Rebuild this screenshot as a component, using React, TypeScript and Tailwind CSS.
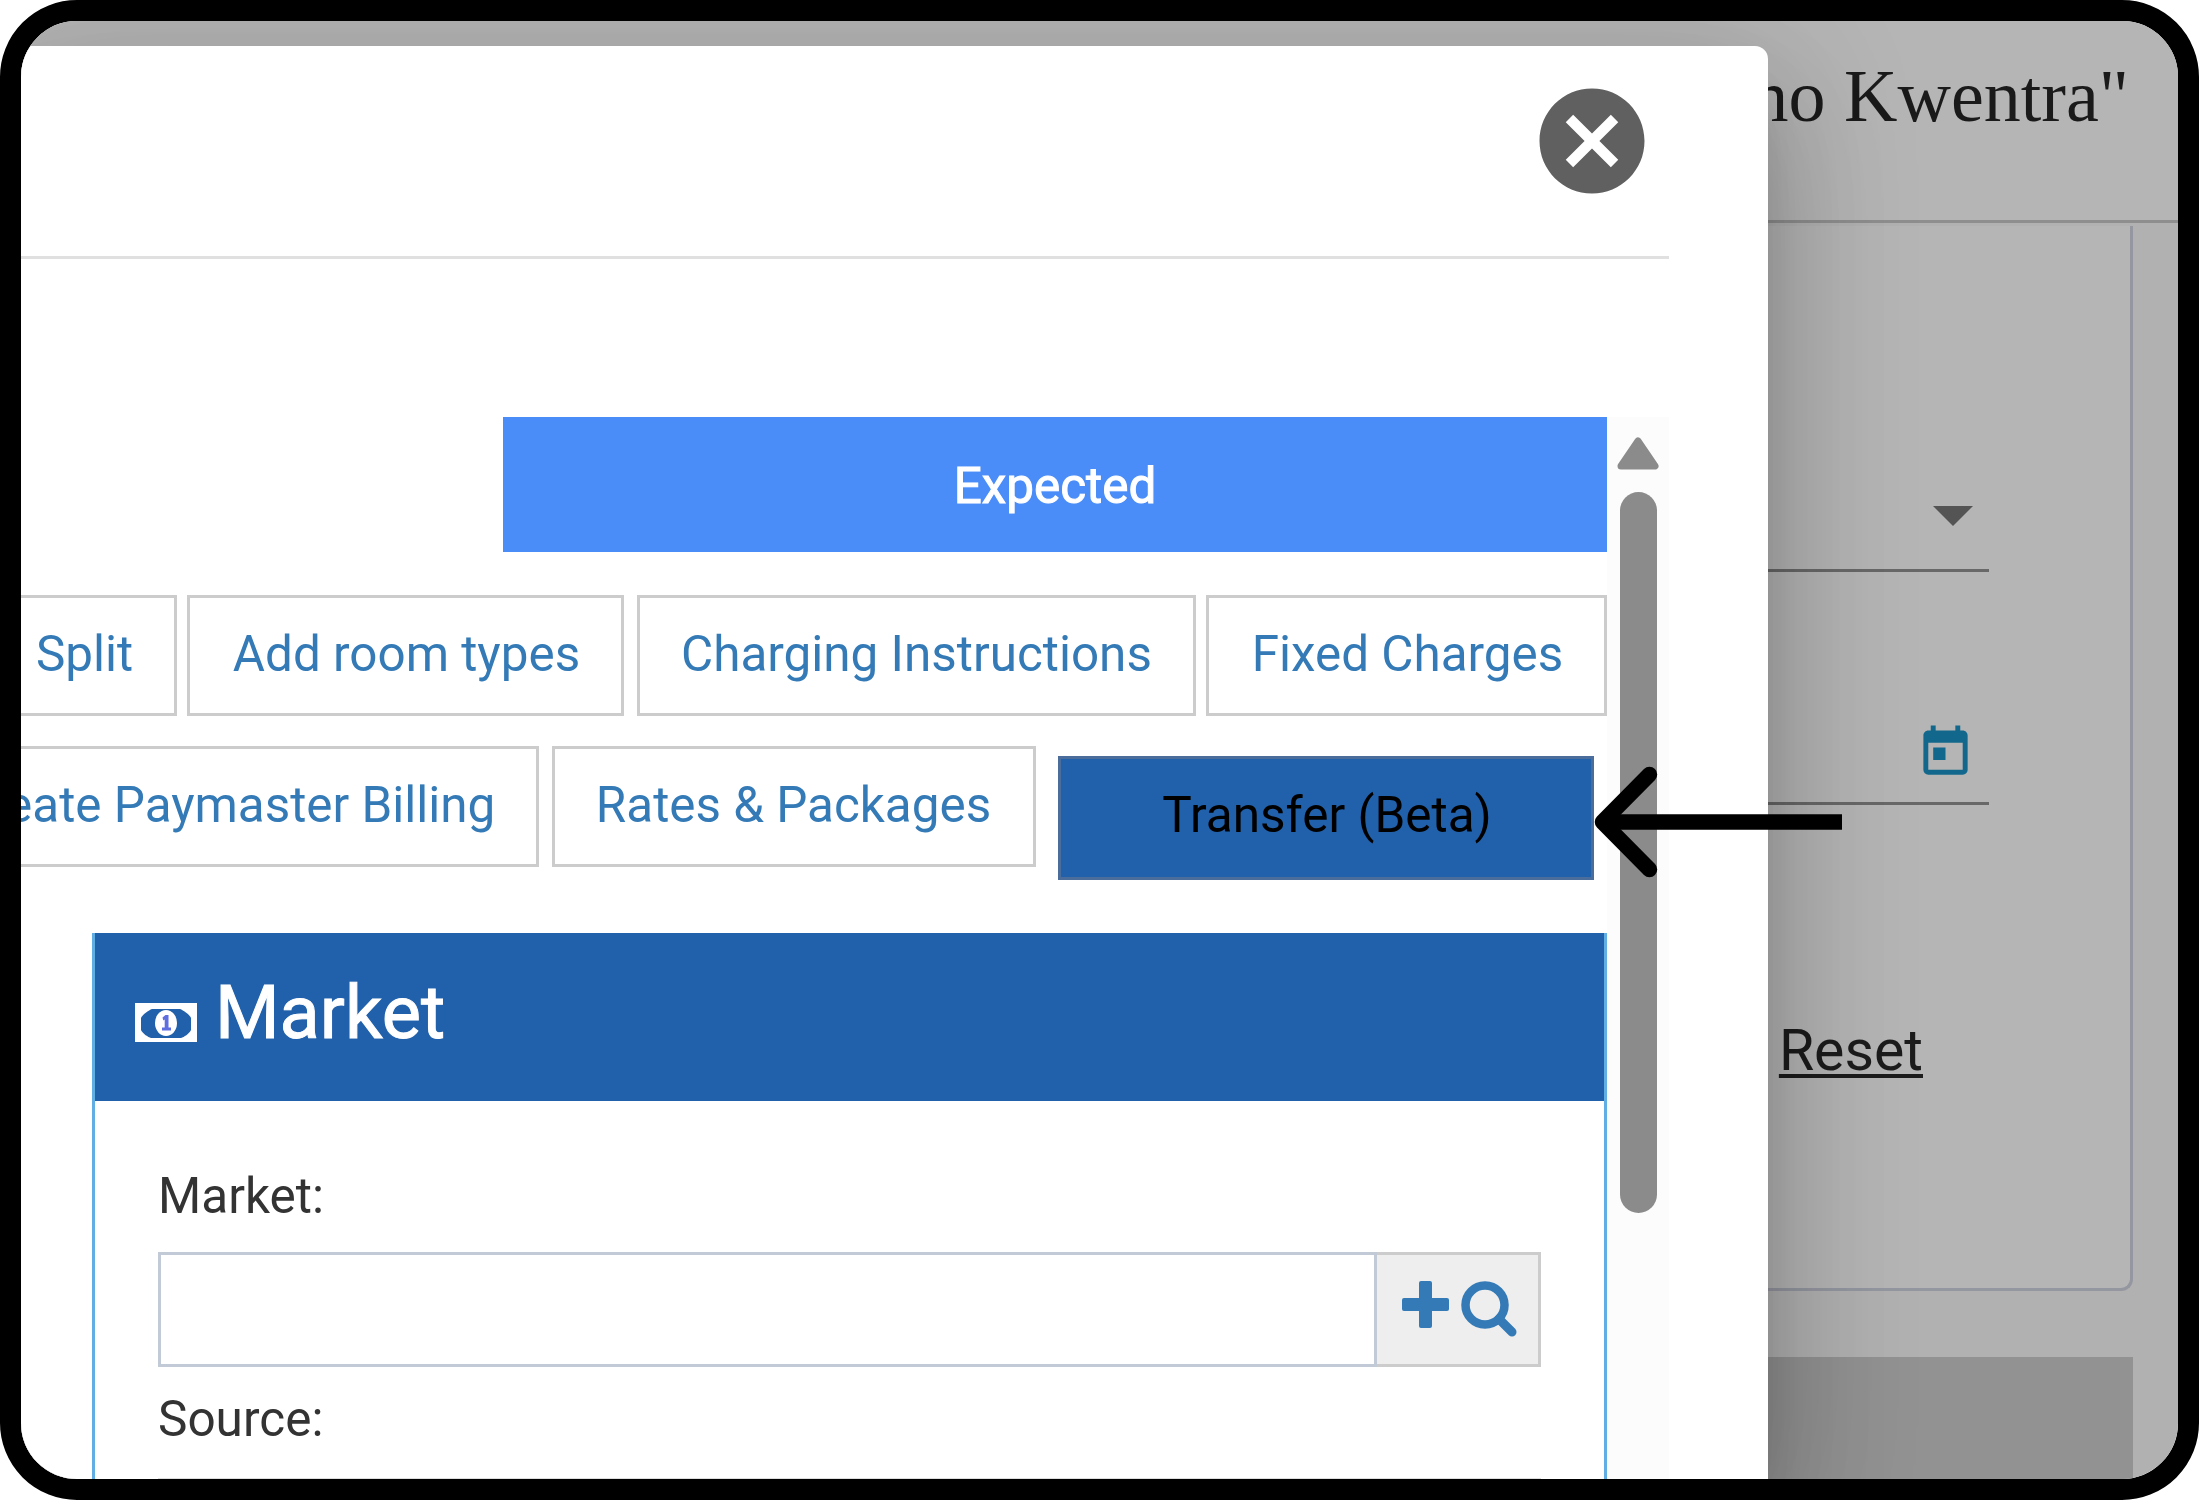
import { MdCancel, MdToday } from "react-icons/md";

type ActionButtonProps = {
  label: string;
  className: string;
};

const ActionButton = ({ label, className }: ActionButtonProps) => (
  <button
    className={`${className} h-[121px] shrink-0 border-[3px] border-[#cccccc] bg-white pb-[2px] flex items-center justify-center text-[49.4px] leading-none text-[#337ab7] whitespace-nowrap`}
  >
    {label}
  </button>
);

const MoneyIcon = () => (
  <svg width="62" height="39" viewBox="0 0 62 39" className="shrink-0">
    <rect width="62" height="39" fill="#fff" />
    <path d="M17 6h28c3 1 10 6 11 9v12c-2 4-7 7-10 8H16c-3-1-8-4-10-8V15c1-3 8-8 11-9z" fill="#2160aa" />
    <ellipse cx="31" cy="20" rx="11" ry="13" fill="#fff" />
    <path d="M27.5 14.5l3-2.5h3v12.5h2.5v3h-9v-3h2.7v-8l-1.4 1z" fill="#5f6fe0" />
  </svg>
);

const PlusIcon = () => (
  <svg width="49" height="49" viewBox="0 0 49 49">
    <path d="M20 1h9q2 0 2 2v15h15q2 0 2 2v9q0 2-2 2H31v15q0 2-2 2h-9q-2 0-2-2V31H3q-2 0-2-2v-9q0-2 2-2h15V3q0-2 2-2z" fill="#337ab7" />
  </svg>
);

const SearchIcon = () => (
  <svg width="58" height="58" viewBox="0 0 58 58">
    <circle cx="25" cy="25" r="19.5" fill="none" stroke="#337ab7" strokeWidth="8.5" />
    <path d="M39 39l13 13" stroke="#337ab7" strokeWidth="9" strokeLinecap="round" />
  </svg>
);

const BackgroundPage = () => (
  <div className="flex h-full flex-col bg-[#b1b1b1]">
    <header className="flex h-[202px] shrink-0 justify-end border-b-[3px] border-[#8e8e8e] bg-[#b5b5b5] pr-[49px] pt-[33px] font-['Liberation_Serif',serif] text-[74px] leading-[84px] text-[#1a1a1a]">
      "Demo Kwentra"
    </header>
    <section className="mr-[45px] mt-[3px] flex h-[1065px] shrink-0 flex-col rounded-br-[12px] border-b-[3px] border-r-[3px] border-[#9496a0] bg-[#b5b5b5] pr-[141px]">
      <div className="flex h-[346px] shrink-0 items-end justify-end border-b-[3px] border-[#686868] pb-[43px] pr-4">
        <svg width="40" height="20" viewBox="0 0 40 20">
          <path d="M0 0h40L20 20z" fill="#545454" />
        </svg>
      </div>
      <div className="flex h-[233px] shrink-0 items-end justify-end border-b-[3px] border-[#686868] pb-5 pr-[14px]">
        <MdToday size={59} color="#12688c" />
      </div>
      <a className="mr-[66px] mt-[213px] self-end text-[57.2px] leading-[66px] text-[#1c1c1c] underline decoration-4 underline-offset-[4px]">
        Reset
      </a>
    </section>
    <div className="mr-[45px] mt-[66px] flex-1 bg-[#929292]" />
  </div>
);

const MarketPanel = () => (
  <section className="ml-[71px] mt-[53px] flex flex-1 flex-col border-x-[3px] border-[#60aee4]">
    <header className="flex h-[168px] shrink-0 items-start bg-[#2160aa] pl-10 text-white">
      <span className="mt-[70px]">
        <MoneyIcon />
      </span>
      <h2 className="ml-[18px] mt-[36px] text-[74px] leading-[88px] [-webkit-text-stroke:1px_white]">Market</h2>
    </header>
    <div className="flex flex-col pl-[63px] pr-[63px] text-[49.5px] leading-[58px] text-[#333333]">
      <label className="mt-[66px]">Market:</label>
      <div className="mt-[27px] flex h-[115px]">
        <div className="flex-1 border-[3px] border-[#c2cad8] bg-white" />
        <div className="flex w-[164px] items-start gap-[10px] border-[3px] border-l-0 border-[#cccccc] bg-[#eeeeee] pl-6 pt-[25px]">
          <PlusIcon />
          <SearchIcon />
        </div>
      </div>
      <label className="mt-[23px]">Source:</label>
      <div className="mt-[30px] h-5 border-t border-[#dddddd]" />
    </div>
  </section>
);

const Scrollbar = () => (
  <div className="flex w-[62px] shrink-0 flex-col items-center bg-[#fcfcfc] pt-5">
    <svg width="42" height="33" viewBox="0 0 42 33">
      <path d="M21 4L38 29H4z" fill="#8b8b8b" stroke="#8b8b8b" strokeWidth="7" strokeLinejoin="round" />
    </svg>
    <div className="mt-[22px] h-[721px] w-[37px] rounded-full bg-[#8b8b8b]" />
  </div>
);

const ReservationDialog = () => (
  <div className="absolute bottom-0 left-0 top-[25px] flex w-[1747px] flex-col rounded-tr-[13px] bg-white pr-[99px] shadow-[0_34px_47px_-22px_rgba(0,0,0,0.2),0_74px_118px_9px_rgba(0,0,0,0.14),0_28px_143px_25px_rgba(0,0,0,0.12)]">
    <header className="flex h-[213px] shrink-0 items-start justify-end border-b-[3px] border-[#e0e0e0] pr-[14px] pt-8">
      <MdCancel size={126} color="#606060" />
    </header>
    <div className="mt-[158px] flex min-h-0 flex-1">
      <div className="flex w-[1586px] shrink-0 flex-col">
        <div className="ml-[482px] flex h-[135px] shrink-0 items-center justify-center bg-[#4b8df8] pt-1 text-[49.4px] leading-none text-white [-webkit-text-stroke:1px_white]">
          Expected
        </div>
        <div className="mt-[43px] flex shrink-0 justify-end">
          <ActionButton label="Split" className="w-[187px] pl-[2px]" />
          <ActionButton label="Add room types" className="ml-[10px] w-[437px] pl-[2px]" />
          <ActionButton label="Charging Instructions" className="ml-[13px] w-[559px]" />
          <ActionButton label="Fixed Charges" className="ml-[10px] w-[401px] pl-[2px]" />
        </div>
        <div className="mt-[30px] flex h-[134px] shrink-0 justify-end pr-[13px]">
          <ActionButton label="Create Paymaster Billing" className="w-[623px] pr-[2px]" />
          <ActionButton label="Rates & Packages" className="ml-[13px] w-[484px] pr-[1px]" />
          <button className="ml-[22px] mt-[10px] flex h-[124px] w-[536px] shrink-0 items-center justify-center border-[3px] border-[#4a6d9c] bg-[#2160aa] pb-[5px] pl-[2px] text-[49.5px] leading-none text-black">
            Transfer (Beta)
          </button>
        </div>
        <MarketPanel />
      </div>
      <Scrollbar />
    </div>
  </div>
);

const PointerArrow = () => (
  <svg className="absolute left-[1573px] top-[740px]" width="250" height="122" viewBox="0 0 250 122">
    <path d="M248 61H9" stroke="#000" strokeWidth="15.5" fill="none" />
    <path d="M55.5 13.5L8.5 61l47 47.5" stroke="#000" strokeWidth="15.5" strokeLinecap="round" strokeLinejoin="round" fill="none" />
  </svg>
);

export default function App() {
  return (
    <div className="h-[1500px] w-[2199px] bg-white font-['Roboto',sans-serif]">
      <div className="relative h-full overflow-hidden rounded-[77px] border-[21px] border-black bg-[#b1b1b1]">
        <BackgroundPage />
        <ReservationDialog />
        <PointerArrow />
      </div>
    </div>
  );
}
